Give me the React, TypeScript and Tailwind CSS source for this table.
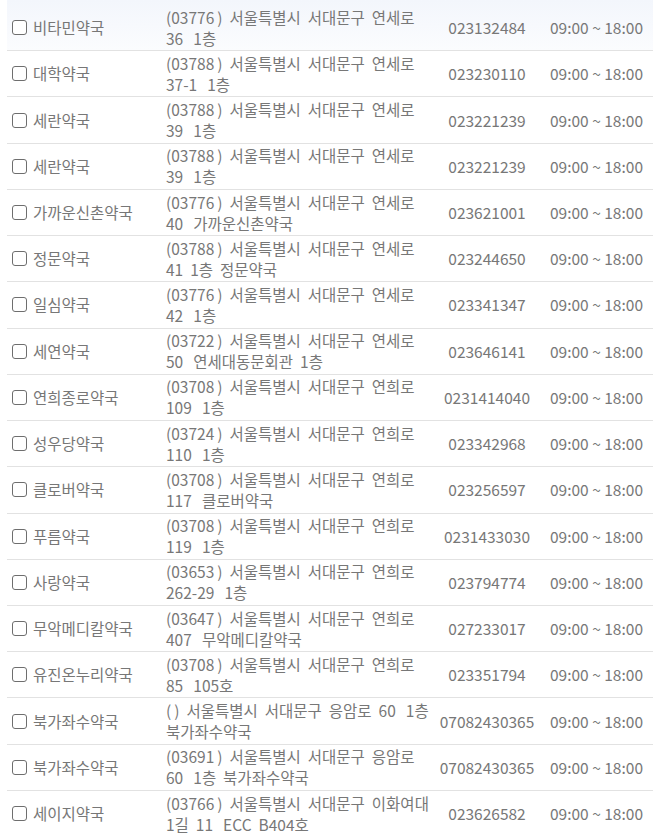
import React from "react";

type Row = { name: string; zip: string; addr: string; phone: string };

const D = " \u2009";

const rows: Row[] = [
  { name: "비타민약국", zip: "03776", addr: `서울특별시 서대문구 연세로 36${D}1층`, phone: "023132484" },
  { name: "대학약국", zip: "03788", addr: `서울특별시 서대문구 연세로 37-1${D}1층`, phone: "023230110" },
  { name: "세란약국", zip: "03788", addr: `서울특별시 서대문구 연세로 39${D}1층`, phone: "023221239" },
  { name: "세란약국", zip: "03788", addr: `서울특별시 서대문구 연세로 39${D}1층`, phone: "023221239" },
  { name: "가까운신촌약국", zip: "03776", addr: `서울특별시 서대문구 연세로 40${D}가까운신촌약국`, phone: "023621001" },
  { name: "정문약국", zip: "03788", addr: "서울특별시 서대문구 연세로 41 1층 정문약국", phone: "023244650" },
  { name: "일심약국", zip: "03776", addr: `서울특별시 서대문구 연세로 42${D}1층`, phone: "023341347" },
  { name: "세연약국", zip: "03722", addr: `서울특별시 서대문구 연세로 50${D}연세대동문회관 1층`, phone: "023646141" },
  { name: "연희종로약국", zip: "03708", addr: `서울특별시 서대문구 연희로 109${D}1층`, phone: "0231414040" },
  { name: "성우당약국", zip: "03724", addr: `서울특별시 서대문구 연희로 110${D}1층`, phone: "023342968" },
  { name: "클로버약국", zip: "03708", addr: `서울특별시 서대문구 연희로 117${D}클로버약국`, phone: "023256597" },
  { name: "푸름약국", zip: "03708", addr: `서울특별시 서대문구 연희로 119${D}1층`, phone: "0231433030" },
  { name: "사랑약국", zip: "03653", addr: `서울특별시 서대문구 연희로 262-29${D}1층`, phone: "023794774" },
  { name: "무악메디칼약국", zip: "03647", addr: `서울특별시 서대문구 연희로 407${D}무악메디칼약국`, phone: "027233017" },
  { name: "유진온누리약국", zip: "03708", addr: `서울특별시 서대문구 연희로 85${D}105호`, phone: "023351794" },
  { name: "북가좌수약국", zip: "", addr: `서울특별시 서대문구 응암로 60${D}1층 북가좌수약국`, phone: "07082430365" },
  { name: "북가좌수약국", zip: "03691", addr: `서울특별시 서대문구 응암로 60${D}1층 북가좌수약국`, phone: "07082430365" },
  { name: "세이지약국", zip: "03766", addr: `서울특별시 서대문구 이화여대1\u2060길 11${D}ECC B404호`, phone: "023626582" },
];

function Check() {
  return <span className="block w-[15px] h-[15px] shrink-0 rounded-[3px] border-[1.5px] border-[#6e6e6e] bg-white" />;
}

export default function App() {
  return (
    <div
      className="w-[653px] overflow-hidden bg-white pl-[7px] text-[15.5px] leading-[21px] text-[#777777]"
      style={{ fontFamily: '"Noto Sans CJK KR", "Noto Sans", sans-serif' }}
    >
      {rows.map((r, i) => (
        <div
          key={i}
          className={
            "grid grid-cols-[159px_270px_102px_1fr] items-center border-b border-[#e2e2e2] " +
            (i === 0 ? "h-[51.2px] pt-[5px] bg-gradient-to-b from-[#f3f6fc] to-[#fbfcfe]" : "h-[46.24px]")
          }
        >
          <div className="flex items-center gap-[6px] pl-[5px]">
            <Check />
            <span className="whitespace-nowrap">{r.name}</span>
          </div>
          <div className="[word-spacing:3.5px]">{`(${r.zip}\u2009) ${r.addr}`}</div>
          <div className="text-center">{r.phone}</div>
          <div className="pl-[12px] whitespace-nowrap">09:00 ~ 18:00</div>
        </div>
      ))}
    </div>
  );
}
